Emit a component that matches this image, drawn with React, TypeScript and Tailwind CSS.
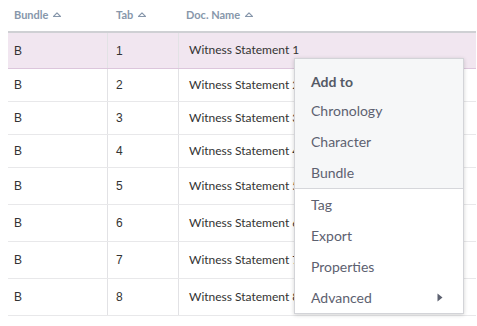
import React from "react";

const rows = [
  { tab: "1", h: "h-[36px]", active: true },
  { tab: "2", h: "h-[33px]" },
  { tab: "3", h: "h-[33px]" },
  { tab: "4", h: "h-[33px]" },
  { tab: "5", h: "h-[37px]" },
  { tab: "6", h: "h-[37px]" },
  { tab: "7", h: "h-[37px]" },
  { tab: "8", h: "h-[37px]" },
];

function Caret() {
  return (
    <svg width="10" height="7" viewBox="0 0 10 7" className="ml-[4px] mb-[3px]">
      <path d="M1.5 5.5 L5 1.8 L8.5 5.5 Z" fill="none" stroke="#8797ab" strokeWidth="1.1" strokeLinejoin="round" />
    </svg>
  );
}

function MenuItem({ label, bold, arrow }: { label: string; bold?: boolean; arrow?: boolean }) {
  return (
    <div
      className={`${bold ? "h-[27px] font-bold text-[#555a66]" : "h-[31px] text-[#5d6170]"} pl-[16px] pr-[20px] flex items-center justify-between text-[14px]`}
    >
      <span>{label}</span>
      {arrow && (
        <svg width="6" height="9" viewBox="0 0 6 9">
          <path d="M0.5 0.5 L5.5 4.5 L0.5 8.5 Z" fill="#5d6170" />
        </svg>
      )}
    </div>
  );
}

export default function App() {
  return (
    <div className="relative w-[477px] h-[326px] overflow-hidden bg-white font-['Lato',sans-serif]">
      <div className="ml-[8px] w-[468px]">
        {/* header */}
        <div className="h-[33px] flex items-center text-[11px] font-bold text-[#8797ab] border-b-2 border-[#cfd0d4]">
          <div className="w-[100px] pl-[6px] flex items-center">
            Bundle <Caret />
          </div>
          <div className="w-[71px] pl-[8px] flex items-center">
            Tab <Caret />
          </div>
          <div className="flex-1 pl-[7px] flex items-center">
            Doc. Name <Caret />
          </div>
        </div>

        {/* rows */}
        {rows.map((r) => (
          <div
            key={r.tab}
            className={`${r.h} flex text-[12px] text-[#333333] border-b ${
              r.active ? "bg-[#f1e6f0] border-[#dcc6dc]" : "border-[#e8e8ea]"
            }`}
          >
            <div className="w-[100px] pl-[6px] flex items-center border-r border-[#e2e2e5] font-['Liberation_Sans',Arial,sans-serif]">
              B
            </div>
            <div className="w-[71px] pl-[8px] flex items-center border-r border-[#e2e2e5] font-['Liberation_Sans',Arial,sans-serif]">
              {r.tab}
            </div>
            <div className="flex-1 pl-[10px] flex items-center pb-[1px]">Witness Statement {r.tab}</div>
          </div>
        ))}
      </div>

      {/* context menu */}
      <div className="absolute left-[294px] top-[58px] w-[170px] bg-white border border-[#d3d4d8] shadow-[0_1px_4px_rgba(0,0,0,0.18)]">
        <div className="bg-[#f6f7f8] pt-[9px] border-b border-[#d6d7db]">
          <MenuItem label="Add to" bold />
          <MenuItem label="Chronology" />
          <MenuItem label="Character" />
          <MenuItem label="Bundle" />
        </div>
        <div>
          <MenuItem label="Tag" />
          <MenuItem label="Export" />
          <MenuItem label="Properties" />
          <MenuItem label="Advanced" arrow />
        </div>
      </div>
    </div>
  );
}
